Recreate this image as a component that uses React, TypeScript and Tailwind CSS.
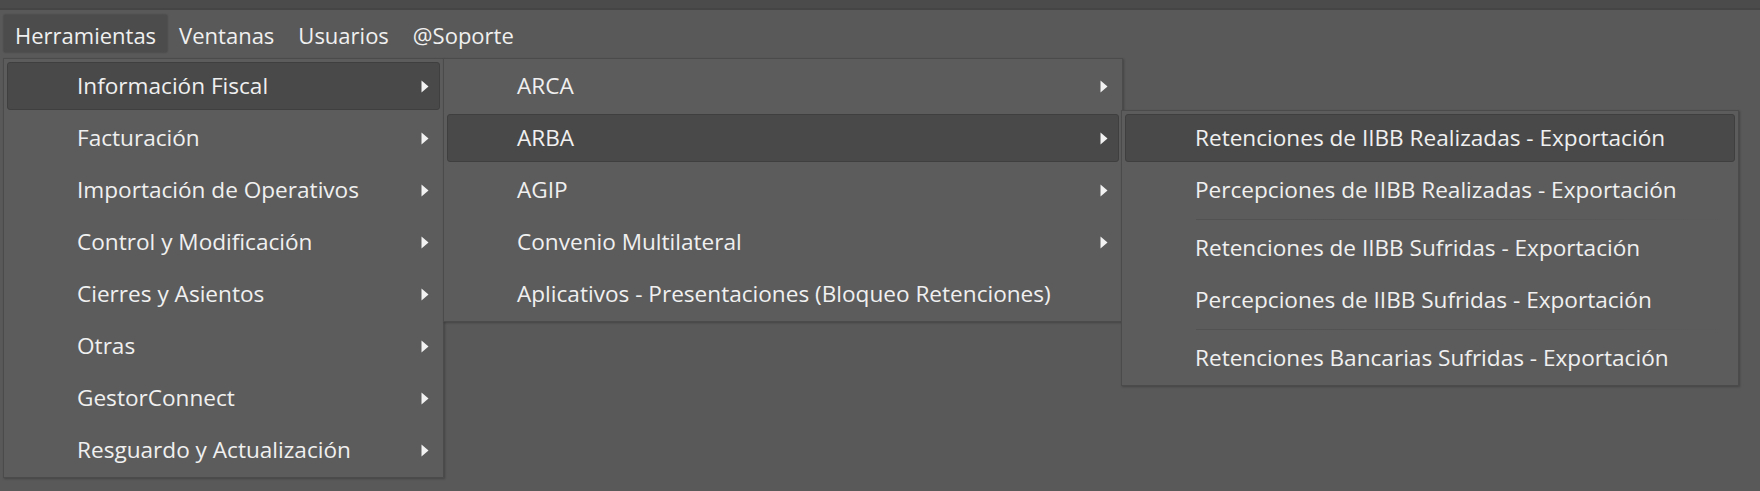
import clsx from "clsx";

type Entry = { label?: string; sub?: boolean; active?: boolean; sep?: boolean };

const herramientas: Entry[] = [
  { label: "Información Fiscal", sub: true, active: true },
  { label: "Facturación", sub: true },
  { label: "Importación de Operativos", sub: true },
  { label: "Control y Modificación", sub: true },
  { label: "Cierres y Asientos", sub: true },
  { label: "Otras", sub: true },
  { label: "GestorConnect", sub: true },
  { label: "Resguardo y Actualización", sub: true },
];

const fiscal: Entry[] = [
  { label: "ARCA", sub: true },
  { label: "ARBA", sub: true, active: true },
  { label: "AGIP", sub: true },
  { label: "Convenio Multilateral", sub: true },
  { label: "Aplicativos - Presentaciones (Bloqueo Retenciones)" },
];

const arba: Entry[] = [
  { label: "Retenciones de IIBB Realizadas - Exportación", active: true },
  { label: "Percepciones de IIBB Realizadas - Exportación" },
  { sep: true },
  { label: "Retenciones de IIBB Sufridas - Exportación" },
  { label: "Percepciones de IIBB Sufridas - Exportación" },
  { sep: true },
  { label: "Retenciones Bancarias Sufridas - Exportación" },
];

function Arrow() {
  return (
    <svg width="8" height="13" viewBox="0 0 8 13" className="shrink-0">
      <path d="M0.5 0.5 L7.5 6.5 L0.5 12.5 Z" fill="#f2f2f2" />
    </svg>
  );
}

function Menu({ items, className }: { items: Entry[]; className: string }) {
  return (
    <div
      className={clsx(
        "absolute border border-[#4b4b4b] bg-[#5c5c5c] py-[1px] text-[22.6px] shadow-[1px_1px_2px_rgba(0,0,0,0.25)]",
        className
      )}
    >
      {items.map((it, i) =>
        it.sep ? (
          <div key={i} className="flex h-[6px] items-center pl-[74px] pr-[8px]">
            <div className="h-px w-full bg-linear-to-r from-[#525252] via-[#535353] to-transparent" />
          </div>
        ) : (
          <div key={i} className="h-[52px] px-[3px] py-[2px]">
            <div
              className={clsx(
                "flex h-full items-center rounded-[3px] border pl-[69px] pr-[10px]",
                it.active
                  ? "border-[#3f3f3f] bg-[#494949]"
                  : "border-transparent"
              )}
            >
              <span className="flex-1 whitespace-nowrap">{it.label}</span>
              {it.sub && <Arrow />}
            </div>
          </div>
        )
      )}
    </div>
  );
}

export default function App() {
  return (
    <div
      className="relative h-screen w-full overflow-hidden bg-[#595959] text-[#f0f0f0]"
      style={{ fontFamily: '"Open Sans", "Noto Sans", sans-serif' }}
    >
      <div className="h-[10px] border-b-2 border-[#454545] bg-[#4b4b4b]" />

      {/* menu bar */}
      <div className="flex h-[46px] items-start px-[4px] pt-[5px] text-[22px]">
        <div className="flex h-[37px] items-center bg-[#4c4c4c] px-[11px] pt-[3px] shadow-[0_0_2px_rgba(0,0,0,0.35)]">
          Herramientas
        </div>
        <div className="flex h-[37px] items-center px-[12px] pt-[3px]">Ventanas</div>
        <div className="flex h-[37px] items-center px-[12px] pt-[3px]">Usuarios</div>
        <div className="flex h-[37px] items-center px-[12px] pt-[3px]">@Soporte</div>
      </div>

      <Menu items={herramientas} className="left-[3px] top-[58px] w-[441px]" />
      <Menu items={fiscal} className="left-[443px] top-[58px] w-[680px]" />
      <Menu items={arba} className="left-[1121px] top-[110px] w-[618px]" />
    </div>
  );
}
